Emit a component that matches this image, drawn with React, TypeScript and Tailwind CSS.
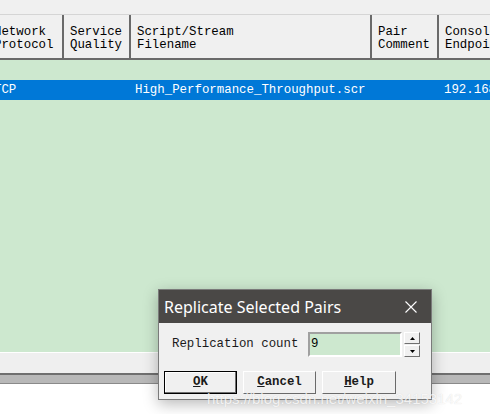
import React from "react";

const mono = { fontFamily: '"Liberation Mono", "DejaVu Sans Mono", monospace' };

function HeaderCell({ w, lines, first }: { w: string; lines: string[]; first?: boolean }) {
  return (
    <div
      className={`${w} shrink-0 h-full border-r-2 border-r-[#6a6a6a] ${first ? "pl-0" : "pl-[6px]"} pt-[11px] leading-[13px] text-[12.4px] text-black whitespace-pre overflow-hidden`}
      style={mono}
    >
      {lines.map((l, i) => (
        <div key={i}>{l}</div>
      ))}
    </div>
  );
}

export default function App() {
  return (
    <div className="relative w-[490px] h-[414px] overflow-hidden bg-white">
      {/* top blank strip */}
      <div className="h-[14px] bg-[#f0f0f0]" />
      {/* header */}
      <div className="h-[46px] flex bg-[#f0f0f0] border-t border-t-[#d5d5d5] border-b-2 border-b-[#6a6a6a] overflow-hidden">
        <div className="-ml-[6px] flex h-full">
          <HeaderCell w="w-[70px]" lines={["Network", "Protocol"]} first />
          <HeaderCell w="w-[67px]" lines={["Service", "Quality"]} />
          <HeaderCell w="w-[241px]" lines={["Script/Stream", "Filename"]} />
          <HeaderCell w="w-[67px]" lines={["Pair", "Comment"]} />
          <HeaderCell w="w-[80px]" lines={["Console", "Endpoint"]} />
        </div>
      </div>
      {/* body */}
      <div className="h-[292px] bg-[#cde8cf] pt-[20px]">
        <div
          className="h-[20px] bg-[#0078d7] text-white text-[12.4px] leading-[20px] flex whitespace-pre overflow-hidden"
          style={mono}
        >
          <div className="-ml-[6px] w-[141px] shrink-0">TCP</div>
          <div className="w-[309px] shrink-0">High_Performance_Throughput.scr</div>
          <div className="shrink-0">192.168.1.1</div>
        </div>
      </div>
      <div className="h-px bg-white" />
      <div className="h-[20px] bg-[#efefef]" />
      <div className="h-[11px] bg-[#b8b8b8] border-t-2 border-t-[#6f6f6f] border-b border-b-[#8a8a8a]" />

      {/* dialog */}
      <div className="absolute left-[158px] top-[289px] w-[274px] h-[111px] bg-[#f0f0f0] border border-[#7a7a7a] shadow-[0_4px_14px_rgba(0,0,0,0.28)] flex flex-col">
        <div className="h-[33px] bg-[#4a4846] flex items-center pl-[5px] pr-[14px] justify-between">
          <span
            className="text-white text-[16px] leading-none"
            style={{ fontFamily: '"Noto Sans", "Open Sans", sans-serif' }}
          >
            Replicate Selected Pairs
          </span>
          <svg width="12" height="12" viewBox="0 0 12 12" className="mt-[1px]">
            <path d="M0.5 0.5 L11.5 11.5 M11.5 0.5 L0.5 11.5" stroke="white" strokeWidth="1.1" fill="none" />
          </svg>
        </div>
        <div className="flex items-center mt-[9px] pl-[13px]">
          <span className="text-[12.4px] text-[#1a1a1a] w-[136px]" style={mono}>
            Replication count
          </span>
          <div
            className="w-[94px] h-[25px] bg-[#cde8cf] border-2 border-t-[#a0a0a0] border-l-[#a0a0a0] border-r-white border-b-white flex items-center pl-[1px] text-[12.4px] text-black"
            style={mono}
          >
            9
          </div>
          <div className="ml-[2px] flex flex-col gap-[1px]">
            <div className="w-[16px] h-[12px] bg-[#f0f0f0] border border-t-white border-l-white border-r-[#707070] border-b-[#707070] flex items-center justify-center">
              <svg width="5" height="3" viewBox="0 0 5 3"><path d="M0 3 L2.5 0 L5 3 Z" fill="black" /></svg>
            </div>
            <div className="w-[16px] h-[12px] bg-[#f0f0f0] border border-t-white border-l-white border-r-[#707070] border-b-[#707070] flex items-center justify-center">
              <svg width="5" height="3" viewBox="0 0 5 3"><path d="M0 0 L2.5 3 L5 0 Z" fill="black" /></svg>
            </div>
          </div>
        </div>
        <div className="flex mt-[14px] pl-[5px] gap-[6px]">
          <div
            className="w-[73px] h-[23px] border border-black bg-[#f0f0f0] flex items-center justify-center text-[12.4px] font-bold text-[#1a1a1a] shadow-[inset_-1px_-1px_0_#707070,inset_1px_1px_0_#ffffff]"
            style={mono}
          >
            <span><span className="underline">O</span>K</span>
          </div>
          <div
            className="w-[73px] h-[23px] bg-[#f0f0f0] border border-t-white border-l-white border-r-[#6a6a6a] border-b-[#6a6a6a] flex items-center justify-center text-[12.4px] font-bold text-[#1a1a1a]"
            style={mono}
          >
            <span><span className="underline">C</span>ancel</span>
          </div>
          <div
            className="w-[74px] h-[23px] bg-[#f0f0f0] border border-t-white border-l-white border-r-[#6a6a6a] border-b-[#6a6a6a] flex items-center justify-center text-[12.4px] font-bold text-[#1a1a1a]"
            style={mono}
          >
            <span><span className="underline">H</span>elp</span>
          </div>
        </div>
      </div>

      {/* watermark */}
      <div
        className="absolute left-[207px] top-[388px] text-[15px] text-white/80 whitespace-nowrap [text-shadow:0_0_1px_rgba(0,0,0,0.15)]"
        style={{ fontFamily: '"Liberation Sans", Arial, sans-serif' }}
      >
        https://blog.csdn.net/weixin_34153142
      </div>
    </div>
  );
}
